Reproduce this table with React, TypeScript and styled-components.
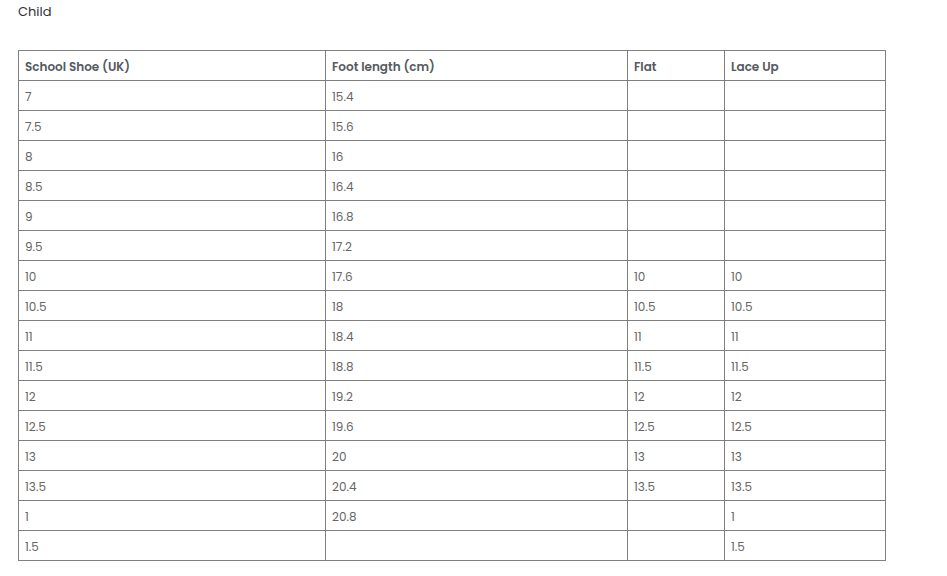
import React from "react";
import styled, { createGlobalStyle } from "styled-components";

const GlobalStyle = createGlobalStyle`
  body {
    margin: 0;
    background: #fff;
    font-family: "Poppins", "Open Sans", "DejaVu Sans", sans-serif;
  }
`;

const rows: [string, string, string, string][] = [
  ["7", "15.4", "", ""],
  ["7.5", "15.6", "", ""],
  ["8", "16", "", ""],
  ["8.5", "16.4", "", ""],
  ["9", "16.8", "", ""],
  ["9.5", "17.2", "", ""],
  ["10", "17.6", "10", "10"],
  ["10.5", "18", "10.5", "10.5"],
  ["11", "18.4", "11", "11"],
  ["11.5", "18.8", "11.5", "11.5"],
  ["12", "19.2", "12", "12"],
  ["12.5", "19.6", "12.5", "12.5"],
  ["13", "20", "13", "13"],
  ["13.5", "20.4", "13.5", "13.5"],
  ["1", "20.8", "", "1"],
  ["1.5", "", "", "1.5"],
];

const headers = ["School Shoe (UK)", "Foot length (cm)", "Flat", "Lace Up"];
const widths = [307, 302, 97, 161];

const Page = styled.div`
  padding: 3px 18px 0;
`;

const Title = styled.div`
  font-size: 13px;
  line-height: 18px;
  color: #333;
  margin-bottom: 29px;
`;

const Table = styled.table`
  width: 868px;
  border-collapse: collapse;
  table-layout: fixed;
  border: 1px solid #222;
`;

const Cell = styled.td<{ $head?: boolean }>`
  height: 27px;
  padding: 2px 6px 0;
  border: 1px solid #7f7f7f;
  font-size: 12px;
  line-height: 18px;
  text-align: left;
  color: ${(p) => (p.$head ? "#555a60" : "#666")};
  font-weight: ${(p) => (p.$head ? 600 : 400)};
`;

export default function App() {
  return (
    <>
      <GlobalStyle />
      <Page>
        <Title>Child</Title>
        <Table>
          <colgroup>
            {widths.map((w, i) => (
              <col key={i} style={{ width: w }} />
            ))}
          </colgroup>
          <thead>
            <tr>
              {headers.map((h) => (
                <Cell as="th" $head key={h}>
                  {h}
                </Cell>
              ))}
            </tr>
          </thead>
          <tbody>
            {rows.map((r, i) => (
              <tr key={i}>
                {r.map((c, j) => (
                  <Cell key={j}>{c}</Cell>
                ))}
              </tr>
            ))}
          </tbody>
        </Table>
      </Page>
    </>
  );
}
